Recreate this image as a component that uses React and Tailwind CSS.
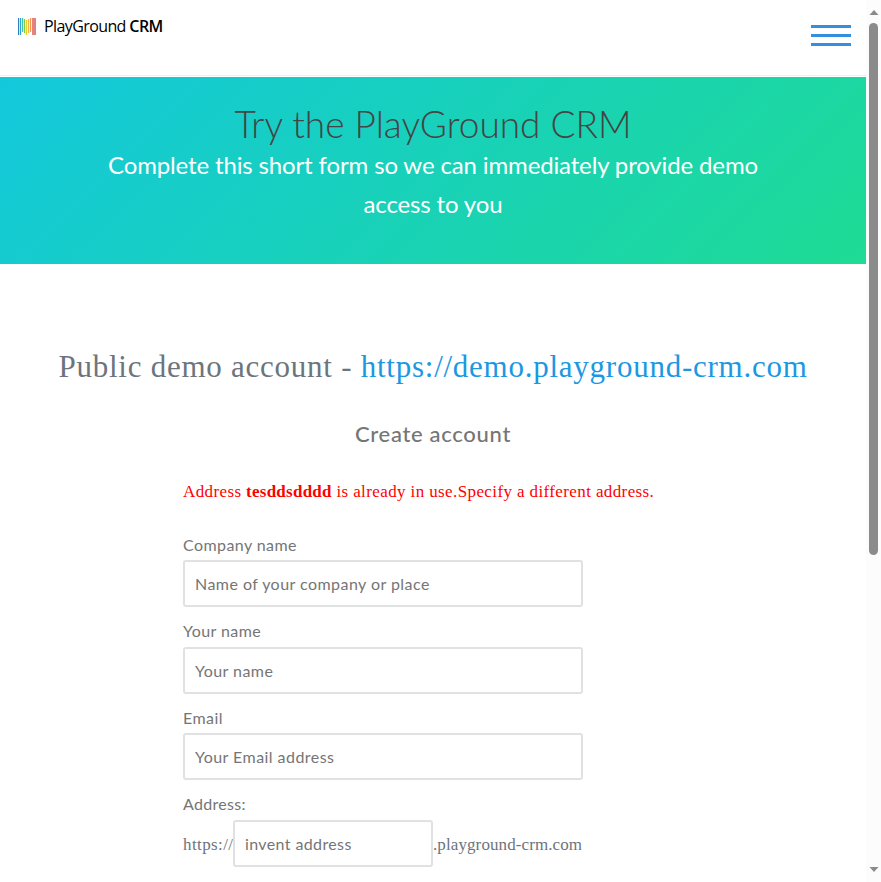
const bars = [
  ["#2f7fc0", 0, 17],
  ["#35a5d0", 0, 17],
  ["#45c4b4", 0, 14],
  ["#7ccb4a", 1, 14],
  ["#e8cf2e", 2, 15],
  ["#f2b53c", 1, 14],
  ["#f09a5a", 0, 14],
  ["#ee8272", 0, 17],
  ["#d98488", 0, 17],
];

function Logo() {
  return (
    <div className="flex">
      <svg width="18" height="18" viewBox="0 0 18 18" className="mt-[18px] ml-[18px]">
        {bars.map(([color, y, h], i) => (
          <rect key={color} x={i * 2} y={y} width={i > 6 ? 2 : 1.2} height={h} fill={color} />
        ))}
      </svg>
      <div className="ml-2 mt-[14px] whitespace-nowrap font-['Open_Sans',sans-serif] text-[16px] leading-6 tracking-[-0.6px] text-black">
        PlayGround <span className="font-semibold">CRM</span>
      </div>
    </div>
  );
}

function Field({ label, placeholder, height, labelHeight }) {
  return (
    <div className={height}>
      <label className={"block text-[16px] leading-[22px] tracking-[0.42px] " + labelHeight}>{label}</label>
      <input
        placeholder={placeholder}
        className="block h-[47px] w-[400px] rounded-[3px] border-2 border-[#e1e1e1] px-[10px] text-[16px] tracking-[0.45px] placeholder:text-[#757575]"
      />
    </div>
  );
}

export default function App() {
  return (
    <div className="flex h-[882px] w-[881px] overflow-hidden bg-white font-['Lato',sans-serif] text-[#757575]">
      <main className="w-[866px] shrink-0">
        <header className="mb-px flex h-[76px] justify-between border-b border-[#eeeeee]">
          <Logo />
          <div className="mr-[15px] mt-[25px] flex flex-col gap-[6px]">
            <span className="h-[3px] w-10 bg-[#3290df]" />
            <span className="h-[3px] w-10 bg-[#3290df]" />
            <span className="h-[3px] w-10 bg-[#3290df]" />
          </div>
        </header>
        <section className="flex h-[187px] flex-col items-center whitespace-nowrap bg-[linear-gradient(135deg,#13c8dc,#1edb94)]">
          <h1 className="mt-[24px] h-[44px] text-[37px] font-light leading-[46px] text-[#444]">Try the PlayGround CRM</h1>
          <p className="text-center text-[24px] leading-[39px] tracking-[-0.14px] text-white">
            Complete this short form so we can immediately provide demo
            <br />
            access to you
          </p>
        </section>
        <h2 className="mt-[81px] h-[43px] whitespace-nowrap text-center font-['Liberation_Serif',serif] text-[31px] leading-[44px] tracking-[0.75px] text-[#6c757d]">
          Public demo account - <a className="text-[#1c98e3]">https://demo.playground-crm.com</a>
        </h2>
        <h3 className="mt-[31px] h-[30px] text-center text-[22px] font-medium leading-[30px] tracking-[0.7px]">Create account</h3>
        <form className="ml-[183px]">
          <p className="mt-[31px] h-[24px] whitespace-nowrap font-['Liberation_Serif',serif] text-[17px] leading-6 tracking-[0.39px] text-[#f00]">
            Address <b className="tracking-[0.25px]">tesddsdddd</b> is already in use.Specify a different address.
          </p>
          <div className="mt-[30px]">
            <Field label="Company name" placeholder="Name of your company or place" height="h-[86px]" labelHeight="h-[26px]" />
            <Field label="Your name" placeholder="Your name" height="h-[87px]" labelHeight="h-[27px]" />
            <Field label="Email" placeholder="Your Email address" height="h-[86px]" labelHeight="h-[26px]" />
            <label className="block h-[27px] text-[16px] leading-[22px] tracking-[0.3px]">Address:</label>
            <div className="flex items-center font-['Liberation_Serif',serif] text-[17px] leading-6 text-[#6c757d]">
              <span className="w-[50px] whitespace-nowrap pt-[3px] tracking-[0.4px]">https://</span>
              <input
                placeholder="invent address"
                className="h-[47px] w-[200px] rounded-[3px] border-2 border-[#e1e1e1] px-[10px] font-['Lato',sans-serif] text-[16px] tracking-[0.38px] placeholder:text-[#757575]"
              />
              <span className="whitespace-nowrap pt-[3px] tracking-[0.1px]">.playground-crm.com</span>
            </div>
          </div>
        </form>
      </main>
      <aside className="flex w-[15px] flex-col items-center bg-[#fcfcfc]">
        <svg width="10" height="5" viewBox="0 0 10 5" className="mt-[10px]"><path d="M5 0 9.5 5H.5z" fill="#8b8b8b" /></svg>
        <div className="mt-[8px] h-[532px] w-[9px] rounded-full bg-[#8b8b8b]" />
        <svg width="10" height="5" viewBox="0 0 10 5" className="mt-auto mb-[10px]"><path d="M5 5 9.5 0H.5z" fill="#8b8b8b" /></svg>
      </aside>
    </div>
  );
}
